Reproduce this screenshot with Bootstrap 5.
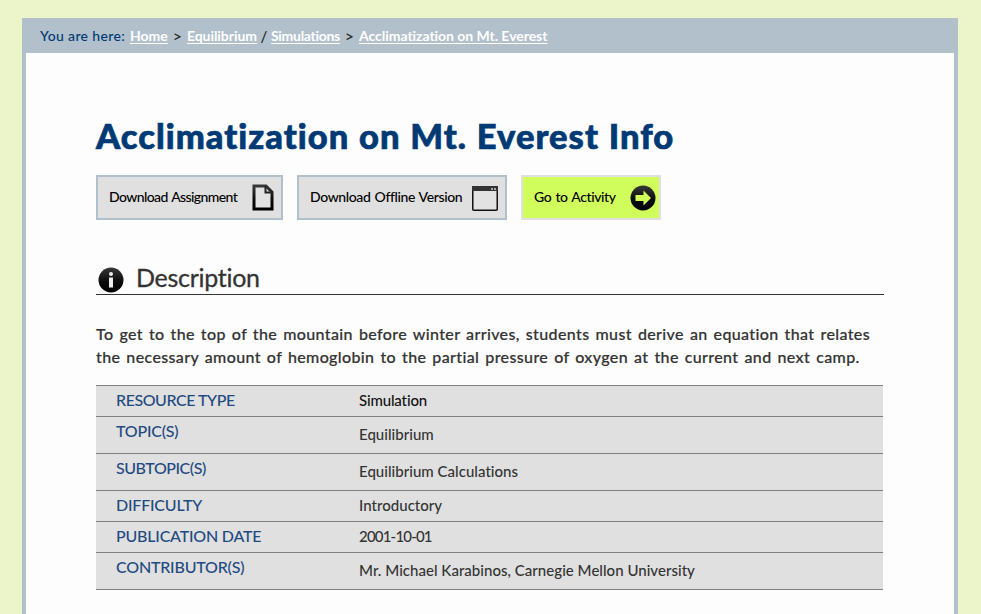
<!DOCTYPE html>
<html lang="en">
<head>
<meta charset="utf-8">
<meta name="viewport" content="width=device-width, initial-scale=1">
<title>Acclimatization on Mt. Everest Info</title>
<link href="https://cdn.jsdelivr.net/npm/bootstrap@5.3.0/dist/css/bootstrap.min.css" rel="stylesheet">
<style>
body { background: #ecf5ca; font-family: Lato, "Gill Sans", sans-serif; color: #333; font-weight: 500; font-variant-ligatures: none; padding: 18px 23px 0 22px; }
.frame { border: solid #b2c0cc; border-width: 0 4px; background: #fdfdfd; height: 596px; }
.trail { background: #b2c0cc; height: 35px; padding-left: 14px; font-size: 14px; line-height: 36px; color: #003a75; white-space: nowrap; }
.trail a { color: #fff; font-weight: 700; text-decoration: underline; text-underline-offset: 2px; text-decoration-skip-ink: none; }
.trail i { font-style: normal; color: #222; width: 19px; text-align: center; font-size: 16px; }
.trail .slash { width: 14px; font-size: 15px; }
.t1 { width: 90px; letter-spacing: .36px; }
.t2 { width: 38px; }
.t3 { width: 70px; letter-spacing: -.06px; }
.t4 { width: 69px; letter-spacing: -.3px; }
.t5 { letter-spacing: -.04px; }
.inner { padding: 62px 70px 0; }
h1 { font-size: 34.500px; line-height: 42px; font-weight: 900; color: #003a75; -webkit-text-stroke: .7px #003a75; margin: 0 0 18px; white-space: nowrap; letter-spacing: 1.03px; word-spacing: .5px; }
.tools { gap: 14px; }
.tool { height: 45px; border: 2px solid #b0c0cd; background: #e0e0e0; color: #000; font-size: 14px; font-weight: 500; padding: 0 7px 0 11px; white-space: nowrap; letter-spacing: -.6px; word-spacing: 1px; }
.tool span { margin-top: -2px; }
.tool-a { width: 187px; }
.tool-b { width: 210px; letter-spacing: -.38px; }
.tool-c { width: 140px; background: #d1fd5c; border-color: #e0e0e0; padding-right: 3px; letter-spacing: -.4px; }
.tool svg { flex: none; }
.tool-b svg, .tool-c svg { margin-top: 1px; }
h2 { font-size: 25px; line-height: 34px; font-weight: 400; color: #333; height: 35px; margin: 40px 0 27px; border-bottom: 1px solid #333; padding-left: 2px; gap: 12px; letter-spacing: -.28px; }
h2 svg { margin-top: 5px; }
h2 span { margin-top: -1px; -webkit-text-stroke: .3px #333; }
.about { font-size: 16px; line-height: 23px; margin: 0 0 17px; white-space: nowrap; height: 46px; letter-spacing: .37px; word-spacing: 1.600px; -webkit-text-stroke: .2px #333; }
.facts { width: 787px; margin: 0; border-top: 1px solid #808080; background: #e0e0e0; font-size: 15px; line-height: 20px; }
.fact { height: 31px; border-bottom: 1px solid #808080; padding: 4px 0 0 20px; }
.fact.tall { height: 37px; }
.fact.tall dd { padding-top: 3px; }
.fact dt { width: 243px; font-weight: 500; color: #1f4a80; font-size: 16px; letter-spacing: -.2px; }
.fact .narrow { letter-spacing: -.45px; }
.fact dd { margin: 0; letter-spacing: .03px; }
.fact .type { color: #111; letter-spacing: -.15px; }
.fact .date { letter-spacing: -.8px; }
</style>
</head>
<body>
<div class="frame">
<nav class="trail d-flex"><span class="t1">You are here:</span><a href="#" class="t2">Home</a><i>&gt;</i><a href="#" class="t3">Equilibrium</a><i class="slash">/</i><a href="#" class="t4">Simulations</a><i>&gt;</i><a href="#" class="t5">Acclimatization on Mt. Everest</a></nav>
<main class="inner">
<h1>Acclimatization on Mt. Everest Info</h1>
<div class="d-flex tools">
<button class="tool tool-a d-flex align-items-center justify-content-between"><span>Download Assignment</span><svg width="22" height="27" viewBox="0 0 22 27"><defs><linearGradient id="ink" x1="0" y1="0" x2="0" y2="1"><stop offset="0" stop-color="#383838"/><stop offset=".55" stop-color="#0c0c0c"/><stop offset="1" stop-color="#000"/></linearGradient></defs><path d="M2 2h12l6 6v17H2z" fill="#e2e2e2" stroke="url(#ink)" stroke-width="3"/><path d="M13.500 2v6.500H20" fill="none" stroke="#222" stroke-width="2"/></svg></button>
<button class="tool tool-b d-flex align-items-center justify-content-between"><span>Download Offline Version</span><svg width="26" height="25" viewBox="0 0 26 25"><rect x=".75" y=".75" width="24.500" height="23.500" rx="1" fill="#e2e2e2" stroke="#111" stroke-width="1.500"/><path d="M0 0h26v5H0z" fill="#333"/><path d="M19 2h2v2h-2zM22 2h2v2h-2z" fill="#aaa"/></svg></button>
<button class="tool tool-c d-flex align-items-center justify-content-between"><span>Go to Activity</span><svg width="26" height="26" viewBox="0 0 26 26"><circle cx="13" cy="13" r="12.500" fill="url(#ink)"/><path d="M5.500 10h8V5.500L21 13l-7.500 7.500V16h-8z" fill="#d1fd5c"/></svg></button>
</div>
<h2 class="d-flex align-items-center"><svg width="26" height="26" viewBox="0 0 26 26"><circle cx="13" cy="13" r="12.500" fill="url(#ink)"/><circle cx="13" cy="7" r="2" fill="#eee"/><path d="M11 10.500h4V20.500h-4z" fill="#eee"/></svg><span>Description</span></h2>
<p class="about">To get to the top of the mountain before winter arrives, students must derive an equation that relates<br>the necessary amount of hemoglobin to the partial pressure of oxygen at the current and next camp.</p>
<dl class="facts">
<div class="fact d-flex"><dt class="narrow">RESOURCE TYPE</dt><dd class="type">Simulation</dd></div>
<div class="fact d-flex tall"><dt>TOPIC(S)</dt><dd>Equilibrium</dd></div>
<div class="fact d-flex tall"><dt class="narrow">SUBTOPIC(S)</dt><dd>Equilibrium Calculations</dd></div>
<div class="fact d-flex"><dt>DIFFICULTY</dt><dd>Introductory</dd></div>
<div class="fact d-flex"><dt>PUBLICATION DATE</dt><dd class="date">2001-10-01</dd></div>
<div class="fact d-flex tall"><dt>CONTRIBUTOR(S)</dt><dd>Mr. Michael Karabinos, Carnegie Mellon University</dd></div>
</dl>
</main>
</div>
<script src="https://cdn.jsdelivr.net/npm/bootstrap@5.3.0/dist/js/bootstrap.bundle.min.js"></script>
</body>
</html>
